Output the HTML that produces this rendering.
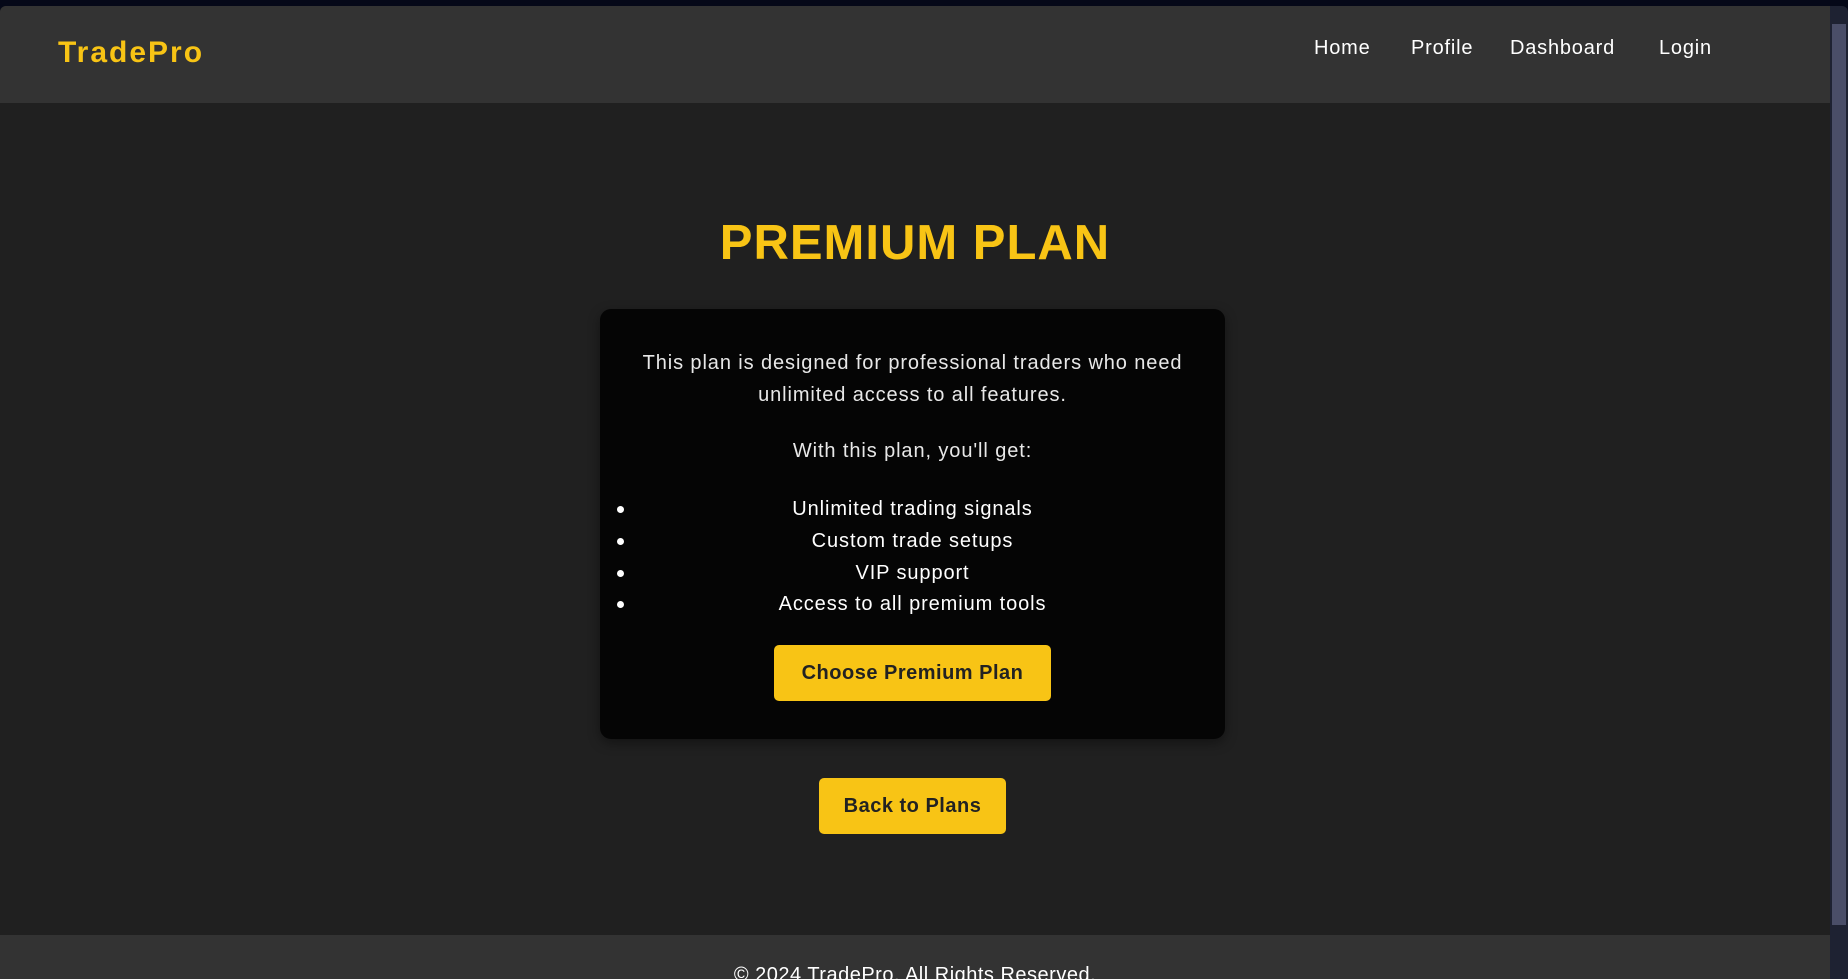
<!DOCTYPE html>
<html><head><meta charset="utf-8"><style>
*{margin:0;padding:0;box-sizing:border-box}
body{width:1848px;height:979px;overflow:hidden;background:#050818;font-family:"Liberation Sans",sans-serif;position:relative}
.page{position:absolute;left:0;top:6px;width:1830px;height:973px;background:#202020;border-top-left-radius:6px;overflow:hidden}
header{position:absolute;left:0;top:0;width:1830px;height:97px;background:#333}
.logo{position:absolute;left:58px;top:30px;font-size:30px;font-weight:bold;color:#f8c415;letter-spacing:2px}
nav{position:absolute;top:31px;left:1314px;font-size:20px;color:#fff;letter-spacing:0.8px}
nav span{position:absolute;white-space:nowrap}
h1{position:absolute;top:209px;left:0;width:1830px;text-align:center;font-size:49px;font-weight:bold;color:#f8c415;letter-spacing:1px}
.card{position:absolute;left:600px;top:303px;width:625px;height:430px;background:#050505;border-radius:11px;box-shadow:0 4px 12px rgba(0,0,0,.4);color:#e8e8e8;font-size:20px;text-align:center;letter-spacing:0.9px}
.card p{position:absolute;left:0;width:625px;line-height:32px}
.li{position:absolute;left:0;width:625px;text-align:center;color:#fff;line-height:32px}
.dot{position:absolute;left:17px;width:7px;height:7px;border-radius:50%;background:#fff}
.btn{position:absolute;background:#f8c415;color:#222;font-weight:bold;font-size:20px;border-radius:5px;text-align:center;letter-spacing:0.5px}
footer{position:absolute;left:0;top:929px;width:1830px;height:60px;background:#333;color:#fff;font-size:20px;letter-spacing:0.5px}
.sb{position:absolute;left:1830px;top:6px;width:18px;height:973px;background:#1e2232;border-top-right-radius:6px}
.th{position:absolute;left:2px;top:18px;width:14px;height:901px;background:#4a4e68}
</style></head><body>
<div class="page">
<header><div class="logo">TradePro</div>
<nav><span style="left:0">Home</span><span style="left:97px">Profile</span><span style="left:196px">Dashboard</span><span style="left:345px">Login</span></nav></header>
<h1>PREMIUM PLAN</h1>
<div class="card">
<p style="top:38px">This plan is designed for professional traders who need<br>unlimited access to all features.</p>
<p style="top:126px">With this plan, you'll get:</p>
<div class="li" style="top:184px">Unlimited trading signals</div><div class="dot" style="top:197px"></div>
<div class="li" style="top:216px">Custom trade setups</div><div class="dot" style="top:229px"></div>
<div class="li" style="top:248px">VIP support</div><div class="dot" style="top:261px"></div>
<div class="li" style="top:279px">Access to all premium tools</div><div class="dot" style="top:292px"></div>
<div class="btn" style="left:174px;top:336px;width:277px;height:56px;line-height:56px">Choose Premium Plan</div>
</div>
<div class="btn" style="left:819px;top:772px;width:187px;height:56px;line-height:56px">Back to Plans</div>
<footer><div style="position:absolute;left:0;width:1830px;text-align:center;top:29px">© 2024 TradePro. All Rights Reserved.</div></footer>
</div>
<div class="sb"><div class="th"></div></div>
</body></html>
